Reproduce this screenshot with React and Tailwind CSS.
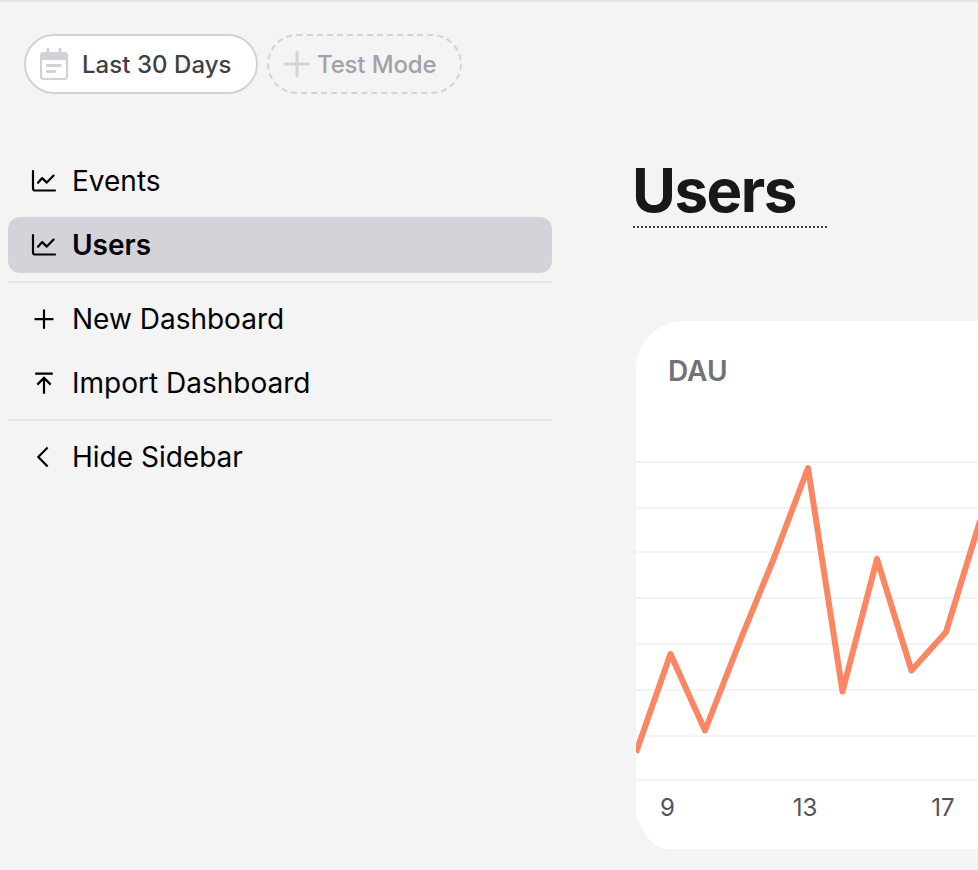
const ICON = "h-[28px] w-[28px] shrink-0";

function ChartIcon() {
  return (
    <svg className={ICON} viewBox="0 0 28 28" fill="none" stroke="black" strokeWidth="2.2" strokeLinecap="round" strokeLinejoin="round">
      <path d="M3 4v17.500a2 2 0 0 0 2 2h20" />
      <path d="M8 15.800l4.200-4.700 4.600 4.500 6.800-7" />
    </svg>
  );
}

function PlusIcon() {
  return (
    <svg className={ICON} viewBox="0 0 28 28" fill="none" stroke="black" strokeWidth="2.2" strokeLinecap="round">
      <path d="M14 5.300v17.600M5.400 14.100h17.200" />
    </svg>
  );
}

function ImportIcon() {
  return (
    <svg className={ICON} viewBox="0 0 28 28" fill="none" stroke="black" strokeWidth="2.2">
      <path d="M5.200 4.700h17.600M14 9v15.800M7.300 15.600L14 8.900l6.700 6.700" />
    </svg>
  );
}

function BackIcon() {
  return (
    <svg className={ICON} viewBox="0 0 28 28" fill="none" stroke="black" strokeWidth="2.2">
      <path d="M17.600 4.600L8.300 14l9.300 9.600" />
    </svg>
  );
}

function CalendarIcon() {
  return (
    <svg className="h-[32px] w-[28px] shrink-0" viewBox="0 0 28 32" fill="none" stroke="#d1d1d7" strokeLinecap="round">
      <rect x="1" y="5" width="26" height="26" rx="3" strokeWidth="2" />
      <path d="M0 12V8a4 4 0 0 1 4-4h20a4 4 0 0 1 4 4v4z" fill="#d1d1d7" stroke="none" />
      <path d="M8 1.200v4M20 1.200v4M7.400 17.500h13.200M7.400 23.500h7.200" strokeWidth="2.8" />
    </svg>
  );
}

function NavItem({ icon, label, active }) {
  return (
    <div className={active ? "flex h-14 items-center gap-[14px] rounded-xl bg-[#d4d3d9] pl-[22px] font-semibold" : "flex h-14 items-center gap-[14px] pl-[22px]"}>
      {icon}
      <span>{label}</span>
    </div>
  );
}

const GRID_LINES = [21, 67, 111, 157, 203, 249, 295, 339];

export default function App() {
  return (
    <div className="flex h-[870px] w-[978px] flex-col overflow-hidden border-t-2 border-[#e4e4e4] bg-[#f4f4f4] font-['Inter',sans-serif] text-black">
      <header className="flex h-[92px] shrink-0 gap-[9px] pl-6 pt-8 text-2xl font-medium">
        <button className="flex h-[60px] w-[234px] items-center gap-[14px] rounded-full border-2 border-[#d1d1d7] bg-white pl-[14px] text-[#3f3f46]">
          <CalendarIcon />
          <span className="whitespace-nowrap pt-[2px] tracking-[0.05px]">Last 30 Days</span>
        </button>
        <button className="flex h-[60px] w-[195px] items-center gap-[7px] rounded-full border-2 border-dashed border-[#d4d4d8] pl-[15px] text-[#a1a1aa]">
          <svg className="h-[26px] w-[26px] shrink-0" viewBox="0 0 26 26" stroke="#d4d4d8" strokeWidth="3" strokeLinecap="round">
            <path d="M13 1.500v23M1.500 13h23" />
          </svg>
          <span className="whitespace-nowrap pt-[2px] tracking-[-0.15px]">Test Mode</span>
        </button>
      </header>
      <div className="flex min-h-0 flex-1">
        <aside className="w-[552px] shrink-0 pl-2 pt-[59px] text-[28px] leading-[40px]">
          <div className="flex flex-col gap-2">
            <NavItem icon={<ChartIcon />} label="Events" />
            <NavItem icon={<ChartIcon />} label="Users" active />
          </div>
          <div className="mt-2 border-t-2 border-[#e4e4e4]" />
          <div className="mt-2 flex flex-col gap-2">
            <NavItem icon={<PlusIcon />} label="New Dashboard" />
            <NavItem icon={<ImportIcon />} label="Import Dashboard" />
          </div>
          <div className="mt-2 border-t-2 border-[#e4e4e4]" />
          <div className="mt-2">
            <NavItem icon={<BackIcon />} label="Hide Sidebar" />
          </div>
        </aside>
        <main className="flex flex-1 flex-col pl-[81px] pt-[61px]">
          <h1 className="h-[73px] w-[194px] border-b-2 border-dotted border-[#3f3f46] indent-[-1px] text-[60px] font-bold leading-[70px] tracking-[-1.5px] text-[#18181b]">Users</h1>
          <section className="ml-[3px] mt-[93px] flex h-[533px] w-[342px] shrink-0 flex-col overflow-hidden rounded-l-[48px] bg-[#f5f5f5]">
            <div className="h-[528px] shrink-0 bg-white">
              <h2 className="h-[119px] pl-8 pt-[30px] text-[28px] font-semibold leading-[40px] text-[#71717a]">DAU</h2>
              <svg className="block h-[341px] w-[342px]" viewBox="0 0 342 341" fill="none">
                {GRID_LINES.map((y) => (
                  <path key={y} d={`M0 ${y + 1}H342`} stroke="#f3f3f3" strokeWidth="2" />
                ))}
                <path d="M0 312.500L34.500 214L69 290.500L104 201L138 118L172 28L206.500 251.500L241 119L275.500 230.500L310 192L344 81" stroke="#fa8664" strokeWidth="6" strokeLinejoin="round" />
              </svg>
              <div className="flex gap-[74px] pt-[9px] text-2xl leading-[36px] text-[#52525b]">
                <span className="w-[63px] text-center">9</span>
                <span className="w-[64px] text-center">13</span>
                <span className="w-[64px] text-center">17</span>
              </div>
            </div>
          </section>
        </main>
      </div>
    </div>
  );
}
